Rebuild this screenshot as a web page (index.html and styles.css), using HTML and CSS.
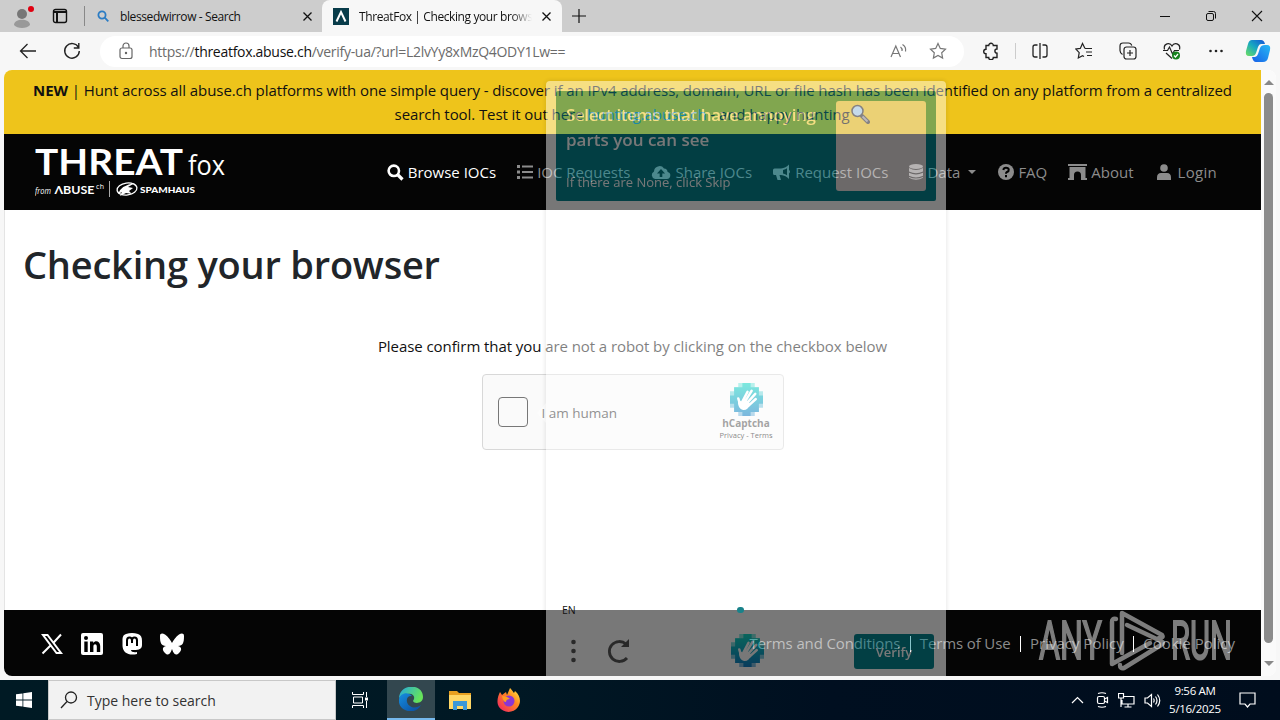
FILE: index.html
```html
<!DOCTYPE html>
<html lang="en">
<head>
    <meta charset="UTF-8">
    <meta name="viewport" content="width=device-width, initial-scale=1.0">
    <title>ThreatFox | Checking your browser</title>
    <link rel="stylesheet" href="styles.css">
</head>
<body>
    <!-- shared hCaptcha hand logo -->
    <svg class="defs" width="0" height="0">
        <defs>
            <linearGradient id="hc" x1="0" y1="0" x2="0" y2="1">
                <stop offset="0" stop-color="#00d5c0"/>
                <stop offset="1" stop-color="#0074bf"/>
            </linearGradient>
            <symbol id="hand" viewBox="0 0 32 32">
                <path fill="url(#hc)" opacity=".5" d="M8 0h16v4h4v4h4v16h-4v4h-4v4H8v-4H4v-4H0V8h4V4h4z"/>
                <path fill="url(#hc)" opacity=".9" d="M12 0h8v4h8v8h4v8h-4v8h-8v4h-8v-4H4v-8H0v-8h4V4h8z"/>
                <path fill="none" stroke="#fff" stroke-width="2.4" stroke-linecap="round" d="M12 18l5-9.500M14 19l7-11.500M16 20l8.500-9.500M18 22l7-6.500M9.500 20l-1.500-5"/>
                <path fill="#fff" d="M8 16l3 2 3-3 6 5c-2 5-5 7-8 6-3-1-5-5-4-10z"/>
            </symbol>
        </defs>
    </svg>

    <div class="tabs">
        <svg class="avatar" width="26" height="30" viewBox="0 0 26 30">
            <circle cx="12" cy="13" r="5" fill="#777"/><path d="M4 24c0-7 16-7 16 0-3 4-13 4-16 0z" fill="#999"/><circle cx="21" cy="8" r="3" fill="#e00010"/>
        </svg>
        <svg class="workspace" width="16" height="16" viewBox="0 0 16 16" fill="none" stroke="#111" stroke-width="1.4"><rect x="1.5" y="1.5" width="13" height="13" rx="2"/><path d="M1.5 4h13M5 4v10" stroke-width="2"/></svg>
        <div class="tab">
            <svg width="12" height="12" viewBox="0 0 12 12" fill="none" stroke="#2b7cc4" stroke-width="1.8"><circle cx="5" cy="5" r="3.6"/><path d="M7.7 7.7l3.6 3.6"/></svg>
            <span class="tab-title">blessedwirrow - Search</span>
            <svg class="x" width="9" height="9" viewBox="0 0 9 9" stroke="#111" stroke-width="1.3"><path d="M.5.5l8 8M8.5.5l-8 8"/></svg>
        </div>
        <div class="tab active">
            <svg width="16" height="17" viewBox="0 0 16 17"><path fill="#083c4a" d="M0 0h16v17H0z"/><path d="M3.5 13.500L8 4l4.500 9.500" fill="none" stroke="#fff" stroke-width="2"/></svg>
            <span class="tab-title fade">ThreatFox | Checking your browser</span>
            <svg class="x" width="9" height="9" viewBox="0 0 9 9" stroke="#111" stroke-width="1.3"><path d="M.5.5l8 8M8.5.5l-8 8"/></svg>
        </div>
        <svg class="plus" width="14" height="14" viewBox="0 0 14 14" stroke="#111" stroke-width="1.2"><path d="M7 0v14M0 7h14"/></svg>
        <div class="window-buttons">
            <svg width="12" height="12" viewBox="0 0 12 12" stroke="#111"><path d="M1 6.500h10"/></svg>
            <svg width="12" height="12" viewBox="0 0 12 12" fill="none" stroke="#111"><rect x="1.500" y="3.500" width="7" height="7" rx="1.500"/><path d="M3.500 1.500h5q2 0 2 2v5"/></svg>
            <svg width="12" height="12" viewBox="0 0 12 12" stroke="#111" stroke-width="1.100"><path d="M1 1l10 10M11 1L1 11"/></svg>
        </div>
    </div>

    <div class="toolbar">
        <svg class="back" width="18" height="16" viewBox="0 0 18 16" fill="none" stroke="#222" stroke-width="1.300"><path d="M17 8H1.500M8.500 1l-7 7 7 7"/></svg>
        <svg class="reload" width="18" height="18" viewBox="0 0 18 18" fill="none" stroke="#222" stroke-width="1.400"><path d="M15.500 5.500A7.300 7.300 0 1 0 16.300 9M15.800 1v5h-5"/></svg>
        <div class="address">
            <svg width="14" height="18" viewBox="0 0 14 18" fill="none" stroke="#666" stroke-width="1.200"><rect x="1" y="6" width="12" height="10.500" rx="2"/><path d="M4 6V4a3 3 0 0 1 6 0v2"/><circle cx="7" cy="11" r=".6" fill="#666"/></svg>
            <span class="url">https://<b>threatfox.abuse.ch</b>/verify-ua/?url=L2lvYy8xMzQ4ODY1Lw==</span>
            <svg class="read" width="18" height="16" viewBox="0 0 18 16" fill="none" stroke="#777" stroke-width="1.200"><path d="M1 14L5.800 3l4.700 11M2.700 10.500h6.200M10.500 4q2 1.500 1.500 4M12.500 1.500q4 2.500 3 7"/></svg>
            <svg width="18" height="18" viewBox="0 0 18 18" fill="none" stroke="#777" stroke-width="1.200"><path d="M9 1.500l2.300 4.900 5.200.7-3.800 3.700.9 5.300L9 13.500l-4.600 2.600.9-5.300L1.500 7.100l5.200-.7z"/></svg>
        </div>
        <div class="actions">
            <svg width="18" height="18" viewBox="0 0 18 18" fill="none" stroke="#222" stroke-width="1.400"><path d="M4 3.500h2.700a2.300 2.300 0 0 1 4.600 0H15V7a2.100 2.100 0 0 0 0 4.200V15.500h-3.700a2.300 2.300 0 0 1-4.600 0H4v-3.700a2.300 2.300 0 0 1 0-4.600z"/></svg>
            <span class="bar"></span>
            <svg width="18" height="18" viewBox="0 0 18 18" fill="none" stroke="#222" stroke-width="1.300"><path d="M6.500 3H4Q2 3 2 5v8q0 2 2 2h2.500M11.500 3H14q2 0 2 2v8q0 2-2 2h-2.500M9 1v16"/></svg>
            <svg width="18" height="18" viewBox="0 0 18 18" fill="none" stroke="#222" stroke-width="1.200"><path d="M10 6.500L7.500 1.500 5.300 6.400.8 7l3.400 3.700-.9 5.300 4.200-2.300 1.500.8M10 6.500h7M11 10h6M12 13.500h5"/></svg>
            <svg width="18" height="18" viewBox="0 0 18 18" fill="none" stroke="#222" stroke-width="1.200"><path d="M3.500 12.500Q1 11 1 8.500V4q0-3 3-3h5.500q2.500 0 3.300 2.500"/><rect x="5" y="5" width="12" height="12" rx="2.500"/><path d="M11 8v6M8 11h6"/></svg>
            <svg width="18" height="18" viewBox="0 0 18 18" fill="none" stroke="#222" stroke-width="1.200"><path d="M1.500 7.500C0 1 7 0 9 4c2-4 9-3 7.500 3.500M0 8.500h4.500L6.500 5l3 7 2-3.500H16M3 11l6 5.500"/><circle cx="13" cy="13.500" r="4" fill="#16821e" stroke="none"/><path d="M11 13.500l1.500 1.500 2.500-3" stroke="#fff"/></svg>
            <svg width="18" height="18" viewBox="0 0 18 18" fill="#222"><circle cx="3.500" cy="9" r="1.300"/><circle cx="9" cy="9" r="1.300"/><circle cx="14.500" cy="9" r="1.300"/></svg>
        </div>
        <svg class="copilot" width="26" height="24" viewBox="0 0 26 24">
            <defs>
                <linearGradient id="cp1" x1="0" y1="1" x2="1" y2="0"><stop offset="0" stop-color="#6fe05f"/><stop offset=".5" stop-color="#18a8c0"/><stop offset="1" stop-color="#1452d8"/></linearGradient>
                <linearGradient id="cp2" x1="0" y1="1" x2="1" y2="0"><stop offset="0" stop-color="#1760e8"/><stop offset="1" stop-color="#28b9f4"/></linearGradient>
            </defs>
            <path fill="url(#cp1)" d="M7 1h9q3 0 4 4h-4q-2 0-3 3l-2 6q-1 3-4 3H4q-4 0-3-5L3 5q1-4 4-4z"/>
            <path fill="url(#cp2)" d="M20 6h2q4 0 3 5l-2 8q-1 4-5 4h-7q-3 0-4-5h3q2 0 3-3l2-6q1-3 5-3z"/>
        </svg>
    </div>

    <div class="frame">
        <div class="page">
            <div class="banner">
                <p><b>NEW</b> | Hunt across all abuse.ch platforms with one simple query - discover if an IPv4 address, domain, URL or file hash has been identified on any platform from a centralized</p>
                <p>search tool. Test it out here <a>hunting.abuse.ch</a> - and happy hunting <svg width="20" height="20" viewBox="0 0 20 20"><path d="M12 12l6 6" stroke="#333" stroke-width="4" stroke-linecap="round"/><path d="M12.500 12.500l5 5" stroke="#999" stroke-width="2"/><circle cx="7.500" cy="7" r="5.500" fill="#a9d4f2" stroke="#333" stroke-width="1.500"/></svg></p>
            </div>

            <div class="navbar">
                <svg class="logo" width="200" height="60" viewBox="0 0 200 60" fill="#fff">
                    <text class="lato" x="0" y="35" font-size="37" font-weight="700" textLength="148" lengthAdjust="spacingAndGlyphs">THREAT</text>
                    <text class="open" x="153" y="35" font-size="27" textLength="37" lengthAdjust="spacingAndGlyphs">fox</text>
                    <text class="open" x="0" y="54" font-size="9" font-style="italic" textLength="16" lengthAdjust="spacingAndGlyphs">from</text>
                    <text class="lato" x="19.500" y="54" font-size="11.500" font-weight="700" textLength="40" lengthAdjust="spacingAndGlyphs">ΛBUSE</text>
                    <text class="open" x="61" y="49" font-size="7" textLength="8">ch</text>
                    <path d="M74.500 41v16" stroke="#aaa"/>
                    <ellipse cx="92" cy="49" rx="10" ry="6" fill="none" stroke="#fff" stroke-width="1.300" transform="rotate(-8 92 49)"/>
                    <path d="M83 54q3-9 17-11l-7 4 5 1-4 3 3 3-6-1-6 3 2-4z"/>
                    <text class="lato" x="105" y="53" font-size="8" font-weight="900" textLength="55" lengthAdjust="spacingAndGlyphs">SPAMHAUS</text>
                </svg>
                <nav>
                    <a class="current"><svg width="17" height="17" viewBox="0 0 17 17" fill="none" stroke="currentColor" stroke-width="2.600"><circle cx="6.800" cy="6.800" r="5.200"/><path d="M10.500 10.500l5 5" stroke-width="3.200"/></svg>Browse IOCs</a>
                    <a><svg width="16" height="14" viewBox="0 0 16 14" fill="currentColor"><path d="M0 0h3v3H0zM0 5.500h3v3H0zM0 11h3v3H0zM5 .5h11v2H5zM5 6h11v2H5zM5 11.500h11v2H5z"/></svg>IOC Requests</a>
                    <a><svg width="20" height="14" viewBox="0 0 20 14" fill="currentColor"><path fill-rule="evenodd" d="M4 14a4 4 0 0 1-1-7.500A5.500 5.500 0 0 1 13 3.500a3.500 3.500 0 0 1 3.600 3.600A3.500 3.500 0 0 1 16 14zM10 4L6 8.500h2.700V12h2.600V8.500H14z"/></svg>Share IOCs</a>
                    <a><svg width="18" height="16" viewBox="0 0 18 16" fill="currentColor"><path d="M1.500 4.500H8V11H6.500l1.500 5H4.500L3 11H1.500Q0 11 0 9.500V6q0-1.500 1.500-1.500z"/><path fill-rule="evenodd" d="M8 4.500Q13 4 16 .5V6q2 1.500 0 3.500V15q-3-3.500-8-4zM10 6v3.500q2.500.5 4 1.800v-7Q12.500 5.600 10 6z"/></svg>Request IOCs</a>
                    <a><svg width="14" height="16" viewBox="0 0 14 16" fill="currentColor"><ellipse cx="7" cy="2.500" rx="7" ry="2.500"/><path d="M0 4q7 4 14 0v3.500q-7 3.500-14 0zM0 8.800q7 3.500 14 0v3q-7 3.500-14 0zM0 13q7 3 14 0v.8q-7 4-14 0z"/></svg>Data<i class="caret"></i></a>
                    <a><svg width="16" height="16" viewBox="0 0 16 16"><circle cx="8" cy="8" r="8" fill="currentColor"/><path d="M5.300 6Q5.700 3.800 8 3.800c3.500 0 3.500 3.200 1 4.200q-1 .5-1 1.700M8 11v2.200" fill="none" stroke="#000" stroke-width="2"/></svg>FAQ</a>
                    <a><svg width="19" height="16" viewBox="0 0 19 16" fill="currentColor"><path d="M0 0h19v2H0zM1.500 3h16v11H19v2h-6v-5a3.500 3.500 0 0 0-7 0v5H0v-2h1.500z"/></svg>About</a>
                    <a class="login"><svg width="14" height="16" viewBox="0 0 14 16" fill="currentColor"><circle cx="7" cy="4" r="3.800"/><path d="M0 16v-2.500Q0 9 4 9h6q4 0 4 4.500V16z"/></svg>Login</a>
                </nav>
            </div>

            <div class="main">
                <h1>Checking your browser</h1>
                <p class="confirm">Please confirm that you are not a robot by clicking on the checkbox below</p>
                <div class="hcaptcha">
                    <div class="check"></div>
                    <span class="human">I am human</span>
                    <div class="brand">
                        <svg width="33" height="33"><use href="#hand"/></svg>
                        <b>hCaptcha</b>
                        <small>Privacy - Terms</small>
                    </div>
                </div>
            </div>

            <div class="footer">
                <div class="social">
                    <svg width="22" height="22" viewBox="0 0 22 22"><path fill="none" stroke="#fff" stroke-width="2" d="M2 2h4.500l13.500 18h-4.500zM20 1.500l-8 8.700M9.500 12.500L1.500 20.500"/></svg>
                    <svg width="22" height="22" viewBox="0 0 22 22"><rect width="22" height="22" rx="2" fill="#fff"/><circle cx="5" cy="5" r="2"/><path d="M3.300 8.500h3.400V19H3.300zM9 8.500h3.200V10c2-3 7-2 7 3v6h-3.400v-5.500c0-3-3.400-3-3.400 0V19H9z"/></svg>
                    <svg width="22" height="22" viewBox="0 0 22 22"><path fill="#fff" d="M5 1q6-2 12 0c3 1 4 3.500 4 7v4c0 4-3 5.500-11 5 0 2 3 2.500 6 2v2C8 23 2 20 1.500 13V8C1.500 4 2 2 5 1z"/><path d="M6 13V7.500c0-4 5-4 5 0V10 7.500c0-4 5-4 5 0V13" fill="none" stroke="#000" stroke-width="2"/></svg>
                    <svg class="bluesky" width="24" height="22" viewBox="0 0 24 22"><path fill="#fff" d="M5 1.500C8 3.500 10.500 7 12 10c1.500-3 4-6.500 7-8.500 2.500-1.500 5-1.500 5 1.500 0 7-1 9.500-6 10 4 1 4 4 1 7-4 4-6-1-7-4-1 3-3 8-7 4-3-3-3-6 1-7-5-.5-6-3-6-10 0-3 2.500-3 5-1.500z"/></svg>
                </div>
                <div class="links"><a>Terms and Conditions</a><i></i><a>Terms of Use</a><i></i><a class="wide">Privacy Policy</a><i></i><a class="wide">Cookie Policy</a></div>
            </div>
        </div>

        <div class="scrollbar"><i class="up"></i><div class="thumb"></div><i class="down"></i></div>

        <!-- challenge popup while it is fading in -->
        <div class="challenge">
            <div class="prompt">
                <div>
                    <h2><span>Select items that have annoying</span><br>parts you can see</h2>
                    <p>If there are None, click Skip</p>
                </div>
                <div class="example"></div>
            </div>
            <div class="controls">
                <svg class="c-logo" width="33" height="33"><use href="#hand"/></svg>
                <div class="verify">Verify</div>
            </div>
        </div>
        <svg class="pointer" width="10" height="20" viewBox="0 0 10 20"><path d="M10 0L1 10l9 10z" fill="#fff" opacity=".46"/></svg>
        <div class="challenge-icons">
            <div class="lang">EN<i></i></div>
            <svg width="80" height="26" viewBox="0 0 80 26"><g fill="#292929"><circle cx="11.500" cy="4" r="2.300"/><circle cx="11.500" cy="13" r="2.300"/><circle cx="11.500" cy="22" r="2.300"/><path d="M67 1v8h-8z"/></g><path d="M64 6a10 10 0 1 0 1 14" fill="none" stroke="#292929" stroke-width="2.800"/></svg>
        </div>

        <svg class="anyrun" width="200" height="64" viewBox="0 0 200 64" fill="#fff" stroke="#fff">
            <text x="2" y="50" font-size="53" stroke-width="1.800" textLength="63" lengthAdjust="spacingAndGlyphs">ANY</text>
            <text x="134" y="50" font-size="53" stroke-width="1.800" textLength="61" lengthAdjust="spacingAndGlyphs">RUN</text>
            <g fill="none" stroke-width="4.500" stroke-linejoin="round" stroke-linecap="round">
                <path d="M85 44V4l40 22q2 3-3 3"/>
                <path d="M90 16l34 16q4 2 0 4L87 59q-4 1-4-3"/>
                <path d="M79 10q-4-1-4 3v42l38-21"/>
            </g>
        </svg>
    </div>

    <div class="taskbar">
        <div class="start"><svg width="16" height="16" viewBox="0 0 16 16" fill="#fff"><path d="M0 2.300L6.500 1.400v6.200H0zM7.300 1.300L16 0v7.600H7.300zM0 8.400h6.500v6.200L0 13.700zM7.300 8.400H16V16l-8.700-1.300z"/></svg></div>
        <div class="search"><svg width="18" height="18" viewBox="0 0 18 18" fill="none" stroke="#222" stroke-width="1.300"><circle cx="11" cy="6.500" r="5.500"/><path d="M7 10.500L1 17"/></svg><span>Type here to search</span></div>
        <div class="task"><svg width="17" height="16" viewBox="0 0 17 16" fill="none" stroke="#fff"><path d="M.5 0v2.500h11V0M.5 16v-2.500h11V16M1.500 5h9v6h-9zM14.500 0v5M14.500 9v7"/><path d="M13 5.500h3v3h-3z" fill="#fff" stroke="none"/></svg></div>
        <div class="task open-app">
            <svg width="24" height="24" viewBox="0 0 24 24">
                <defs>
                    <linearGradient id="e1" x1="0" y1="0" x2="1" y2=".4"><stop offset="0" stop-color="#24a7e0"/><stop offset="1" stop-color="#66e35a"/></linearGradient>
                    <linearGradient id="e2" x1="0" y1="0" x2="1" y2="1"><stop offset="0" stop-color="#168ee0"/><stop offset="1" stop-color="#0b4a9c"/></linearGradient>
                </defs>
                <path fill="url(#e1)" d="M0 11C1-4 24-4 24 10c0 7-9 7-10 4 3-4 0-8-5-7-4 0-7 2-9 4z"/>
                <path fill="url(#e2)" d="M0 12c1-6 9-8 13-3-6-1-7 7-2 10 4 3 8 1 11-1-3 6-9 7-13 6-6-1-10-6-9-12z"/>
            </svg>
        </div>
        <div class="task"><svg width="22" height="20" viewBox="0 0 22 20"><path fill="#e8a020" d="M0 1h8l2 2h12v5H0z"/><path fill="#ffd766" d="M0 5h22v14H0z"/><path fill="#3a97d8" d="M4 11h14v9h-4v-4H8v4H4z"/></svg></div>
        <div class="task"><svg width="24" height="24" viewBox="0 0 24 24">
            <defs><linearGradient id="ff" x1="1" y1="0" x2="0" y2="1"><stop offset="0" stop-color="#fff34a"/><stop offset=".4" stop-color="#ff8a1f"/><stop offset="1" stop-color="#f0186a"/></linearGradient></defs>
            <path fill="url(#ff)" d="M3 4l2 3 4-3 1 3 3-7c3 3 3 4 4 5l1-2c6 5 6 12 3 16-5 7-15 6-19 0C-1 14 1 8 3 4z"/>
            <circle cx="12" cy="13" r="5.500" fill="#8a36d4"/><path fill="#ff9c20" d="M5 8q5 0 8 3-4 0-4 3-3 0-4-6z"/>
        </svg></div>
        <div class="tray">
            <svg width="13" height="8" viewBox="0 0 13 8" fill="none" stroke="#fff" stroke-width="1.200"><path d="M1 7l5.500-5.500L12 7"/></svg>
            <svg width="14" height="16" viewBox="0 0 14 16" fill="none" stroke="#fff" stroke-width="1.200"><rect x="2.500" y="4.500" width="7" height="7" rx="1.500"/><path d="M9.500 7l3-1.500v5l-3-1.500M3 1.500q4-1.500 8 0M3 14.500q4 1.500 8 0"/></svg>
            <svg width="17" height="15" viewBox="0 0 17 15" fill="none" stroke="#fff" stroke-width="1.200"><path d="M6 3.500h10v7.500H4V7M10 11v3M6.500 14h7M3 5v9"/><path d="M.5.500h5V5h-5z"/></svg>
            <svg width="17" height="15" viewBox="0 0 17 15" fill="none" stroke="#fff" stroke-width="1.200"><path d="M1 5h2.500l4-3.500v12l-4-3.500H1zM9.500 5.500q1.300 2 0 4M11.500 3.500q3 4 0 8M13.500 1.500q4.500 6 0 12"/></svg>
            <div class="clock">9:56 AM<br>5/16/2025</div>
            <svg width="17" height="16" viewBox="0 0 17 16" fill="none" stroke="#fff" stroke-width="1.200"><path d="M1 1h15v11h-5l-2.500 3L6 12H1z"/></svg>
        </div>
    </div>
</body>
</html>
```
FILE: styles.css
```css
body {
    margin: 0;
    width: 1280px;
    height: 720px;
    overflow: hidden;
    background: #f7f7f7;
    font-family: "Open Sans", "Noto Sans", sans-serif;
    font-size: 15px;
    color: #111;
}
p, h1, h2 {
    margin: 0;
}
svg {
    flex-shrink: 0;
}
.defs {
    position: absolute;
}
.lato {
    font-family: Lato, sans-serif;
}
.open {
    font-family: "Open Sans", sans-serif;
}

/* browser chrome */
.tabs {
    display: flex;
    align-items: center;
    height: 32px;
    background: #cdcdcd;
}
.avatar {
    margin-left: 10px;
}
.workspace {
    margin-left: 16px;
}
.tab {
    display: flex;
    align-items: center;
    box-sizing: border-box;
    width: 238px;
    height: 20px;
    margin-left: 16px;
    padding-left: 12px;
    border-left: 1px solid #888;
    font-size: 12px;
}
.tab-title {
    width: 173px;
    margin-left: 11px;
    white-space: nowrap;
    overflow: hidden;
    letter-spacing: -0.4px;
}
.tab .x {
    margin-left: 10px;
}
.tab.active {
    width: 240px;
    height: 32px;
    margin-left: 0;
    padding-left: 11px;
    border: 0;
    border-radius: 8px 8px 0 0;
    background: #f7f7f7;
}
.tab .fade {
    margin-left: 10px;
    -webkit-mask-image: linear-gradient(90deg, #000 88%, transparent);
    mask-image: linear-gradient(90deg, #000 88%, transparent);
}
.plus {
    margin-left: 10px;
}
.window-buttons {
    display: flex;
    gap: 34px;
    margin-left: auto;
    margin-right: 17px;
}
.toolbar {
    display: flex;
    align-items: center;
    height: 38px;
}
.back {
    margin-left: 19px;
}
.reload {
    margin-left: 26px;
}
.address {
    display: flex;
    align-items: center;
    box-sizing: border-box;
    width: 864px;
    height: 31px;
    margin-left: 19px;
    padding: 0 17px 0 19px;
    border-radius: 16px;
    background: #fff;
}
.url {
    margin-left: 16px;
    font-size: 14px;
    letter-spacing: -0.29px;
    color: #6b6b6b;
}
.url b {
    font-weight: 400;
    color: #111;
}
.read {
    margin-left: auto;
    margin-right: 21px;
}
.actions {
    display: flex;
    align-items: center;
    gap: 26px;
    margin-left: 18px;
}
.bar {
    width: 1px;
    height: 16px;
    margin: 0 -11px 0 -11px;
    background: #ccc;
}
.copilot {
    margin-left: 20px;
}

/* page viewport */
.frame {
    position: relative;
    display: flex;
    box-sizing: border-box;
    width: 1272px;
    height: 606px;
    margin: 0 4px 4px;
    border-radius: 8px;
    overflow: hidden;
    background: #fff;
}
.page {
    display: flex;
    flex-direction: column;
    width: 1257px;
}
.banner {
    box-sizing: border-box;
    height: 64px;
    padding-top: 8px;
    background: #eec41b;
    text-align: center;
    white-space: nowrap;
    line-height: 24px;
    letter-spacing: -0.08px;
}
.banner a {
    color: #2f8fc0;
}
.banner svg {
    margin-left: -3px;
    vertical-align: -4px;
}
.navbar {
    display: flex;
    align-items: center;
    height: 76px;
    background: #050505;
}
.logo {
    margin: 0 0 5px 31px;
}
nav {
    display: flex;
    gap: 21px;
    margin-left: auto;
    margin-right: 44px;
}
nav a {
    display: flex;
    align-items: center;
    gap: 4px;
    color: #8c8c8c;
    white-space: nowrap;
}
nav .current {
    color: #fff;
}
nav .login {
    gap: 6px;
    margin-left: 2px;
    letter-spacing: 0.3px;
    padding-left: 1px;
}
nav .login svg {
    margin-left: -1px;
    margin-right: 1px;
}
.caret {
    margin: 0 1px 0 4px;
    border: 4px solid transparent;
    border-top-color: #8c8c8c;
    border-bottom: 0;
}
.main {
    display: flex;
    flex-direction: column;
    align-items: center;
    height: 400px;
    box-shadow: inset 1px 0 #e4e4e4;
}
h1 {
    align-self: flex-start;
    margin: 26px 0 0 19px;
    font-size: 38px;
    line-height: 56px;
    font-weight: 600;
    letter-spacing: -0.22px;
    color: #212529;
}
.confirm {
    margin-top: 42px;
    line-height: 24px;
    letter-spacing: -0.07px;
}
.hcaptcha {
    display: flex;
    align-items: center;
    box-sizing: border-box;
    width: 302px;
    height: 76px;
    margin-top: 16px;
    padding-left: 15px;
    border: 1px solid #d8d8d8;
    border-radius: 4px;
    background: #fafafa;
}
.check {
    box-sizing: border-box;
    width: 30px;
    height: 30px;
    border: 1px solid #777;
    border-radius: 4px;
    background: #fafafa;
}
.human {
    margin: 2px 0 0 14px;
    font-size: 13.5px;
    color: #333;
}
.brand {
    display: flex;
    flex-direction: column;
    align-items: center;
    margin-left: auto;
    margin-right: 10px;
}
.brand b {
    font-size: 10px;
    line-height: 14px;
    color: #555;
}
.brand small {
    font-size: 7.5px;
    line-height: 11px;
    color: #222;
}
.footer {
    display: flex;
    align-items: center;
    height: 66px;
    background: #050505;
}
.social {
    display: flex;
    gap: 18px;
    margin: 2px 0 0 37px;
}
.bluesky {
    margin-left: -1px;
}
.links {
    display: flex;
    align-items: center;
    margin-left: auto;
    margin-right: 26px;
    color: #8c8c8c;
    letter-spacing: -0.13px;
    white-space: nowrap;
}
.links .wide {
    letter-spacing: 0;
}
.links i {
    width: 1px;
    height: 16px;
    margin: 2px 9px 0 9.500px;
    background: #fff;
}
.scrollbar {
    display: flex;
    flex-direction: column;
    align-items: center;
    width: 15px;
    background: #fafafa;
}
.scrollbar i {
    border: 5px solid transparent;
}
.scrollbar .up {
    margin-top: 10px;
    border-top: 0;
    border-bottom-color: #888;
}
.thumb {
    width: 9px;
    height: 550px;
    margin-top: 8px;
    margin-bottom: 18px;
    border-radius: 5px;
    background: #8b8b8b;
}
.scrollbar .down {
    border-bottom: 0;
    border-top-color: #888;
}

/* captcha challenge, over the page */
.challenge {
    position: absolute;
    left: 542px;
    top: 11px;
    display: flex;
    flex-direction: column;
    justify-content: space-between;
    box-sizing: border-box;
    width: 400px;
    height: 600px;
    padding: 10px 10px 11px;
    border-radius: 4px;
    background: #fff;
    box-shadow: 0 0 4px 1px rgba(0, 0, 0, 0.2);
    opacity: 0.46;
}
.prompt {
    display: flex;
    justify-content: space-between;
    box-sizing: border-box;
    height: 110px;
    padding: 10px;
    border-radius: 2px;
    background: #00838f;
    color: #fff;
}
.prompt h2 {
    margin-top: 1px;
    font-size: 17px;
    line-height: 25px;
    font-weight: 600;
    white-space: nowrap;
}
.prompt h2 span {
    letter-spacing: -0.4px;
}
.prompt p {
    margin-top: 20px;
    font-size: 13px;
    line-height: 20px;
}
.example {
    width: 90px;
    height: 90px;
    margin-left: -10px;
    border-radius: 3px;
    background: #e6e0e0;
}
.controls {
    display: flex;
    align-items: flex-start;
    justify-content: space-between;
    height: 36px;
    padding: 0 2px 0 175px;
}
.verify {
    width: 80px;
    height: 35px;
    border-radius: 3px;
    background: #00838f;
    color: #fff;
    font-size: 13px;
    font-weight: 600;
    line-height: 36px;
    text-align: center;
}
.pointer {
    position: absolute;
    left: 532px;
    top: 333px;
}
.challenge-icons {
    position: absolute;
    left: 558px;
    top: 533px;
    font-size: 10.5px;
}
.lang {
    display: flex;
    align-items: center;
    height: 14px;
    margin-bottom: 21px;
}
.lang i {
    width: 7px;
    height: 6px;
    margin-left: 161px;
    border-radius: 3px;
    background: #19828a;
}

.anyrun {
    position: absolute;
    left: 1033px;
    top: 539px;
    font-family: Roboto, sans-serif;
    opacity: 0.48;
}

/* windows taskbar */
.taskbar {
    display: flex;
    align-items: center;
    height: 40px;
    background: linear-gradient(90deg, #001a24 0%, #001824 40%, #000f20 65%, #000d1d 100%);
}
.start, .task {
    display: flex;
    align-items: center;
    justify-content: center;
    box-sizing: border-box;
    width: 48px;
    height: 40px;
}
.search {
    display: flex;
    align-items: center;
    box-sizing: border-box;
    width: 288px;
    height: 40px;
    padding-left: 11px;
    border: 1px solid #c8c8c8;
    background: #f2f2f2;
    font-size: 14px;
    color: #333;
}
.search span {
    margin-left: 9px;
}
.task {
    margin-right: 1px;
}
.search + .task {
    margin-right: 3px;
}
.open-app {
    border-bottom: 2px solid #76b9ed;
    background: #33474f;
}
.tray {
    display: flex;
    align-items: center;
    gap: 9px;
    margin-left: auto;
    margin-right: 24px;
}
.tray svg:first-child {
    margin-right: 2px;
}
.tray svg:nth-child(2) {
    margin-right: 0;
}
.clock {
    width: 58px;
    margin: 0 6px 0 -4px;
    color: #fff;
    font-size: 11.5px;
    line-height: 18px;
    letter-spacing: -0.3px;
    text-align: center;
}
```
